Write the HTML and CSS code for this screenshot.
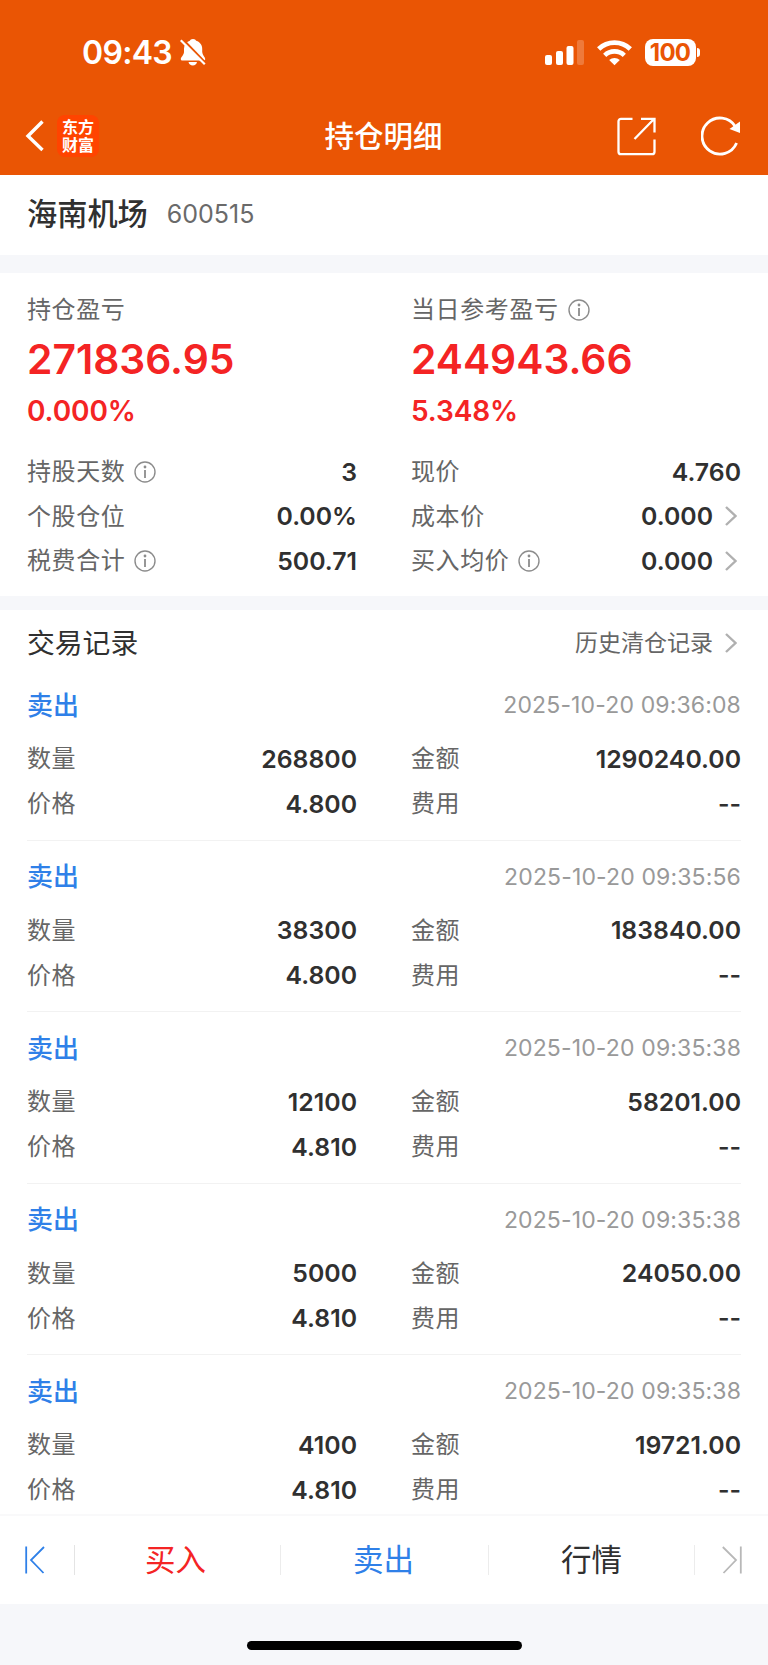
FILE: index.html
```
<!DOCTYPE html>
<html lang="zh-CN">
<head>
  <meta charset="UTF-8" />
  <meta name="viewport" content="width=device-width, initial-scale=1.0" />
  <title>持仓明细</title>
  <link rel="stylesheet" href="styles.css">
</head>
<body>
  <svg class="defs" width="0" height="0">
    <symbol id="info" viewBox="0 0 22 22">
      <circle cx="11" cy="11" r="10" fill="none" stroke="#8c8c8c" stroke-width="1.4" />
      <circle cx="11" cy="6" r="1.4" fill="#8c8c8c" />
      <path d="M11 9v8" stroke="#8c8c8c" stroke-width="1.8" />
    </symbol>
    <symbol id="more" viewBox="0 0 12 20">
      <path d="M1 1l9.5 9L1 19" fill="none" stroke="#b0b0b0" stroke-width="2.4" />
    </symbol>
  </svg>

  <header class="header">
    <div class="status">
      <span class="clock">09:43</span>
      <svg class="bell" width="26" height="28" viewBox="0 0 26 28">
        <path d="M13 1c-1.8 0-2.8 1-3.2 1.7C6 4 4 7 4 11v3c0 3-3.200 5-3.200 7 0 1 .7 1.500 1.700 1.500h21c1 0 1.700-.5 1.700-1.500 0-2-3-4-3-7v-3c0-4-2-7-6-8.300C15.800 2 14.800 1 13 1z" fill="#fff" />
        <path d="M8.500 24h8.500c-.4 2.200-2 3.500-4.200 3.500S8.900 26.200 8.500 24z" fill="#fff" />
        <path d="M2.500 1l24 25" stroke="#ea5504" stroke-width="2.400" />
        <path d="M.8 2.300l24 24" stroke="#fff" stroke-width="2.200" />
      </svg>
      <svg class="signal" width="39" height="26" viewBox="0 0 39 26">
        <rect x="0" y="15" width="7" height="10" rx="2" fill="#fff" />
        <rect x="11" y="11" width="7" height="14" rx="2" fill="#fff" />
        <rect x="21.500" y="6" width="7" height="19" rx="2" fill="#fff" />
        <rect x="32" y="0" width="7" height="25" rx="2" fill="#fff" fill-opacity=".22" />
      </svg>
      <svg class="wifi" width="35" height="26" viewBox="0 0 35 26">
        <path d="M17.500 25.300l-5.300-5.200a8 8 0 0 1 10.600 0z" fill="#fff" />
        <path d="M7.700 15.300a14.200 14.200 0 0 1 19.600 0" fill="none" stroke="#fff" stroke-width="4.600" />
        <path d="M1.700 8.900a23 23 0 0 1 31.600 0" fill="none" stroke="#fff" stroke-width="4.800" />
      </svg>
      <span class="battery">100</span>
      <span class="battery-cap"></span>
    </div>
    <div class="nav">
      <svg class="back" width="19" height="32" viewBox="0 0 19 32">
        <path d="M17.500 1.500L3 16l14.500 14" fill="none" stroke="#fff" stroke-width="3.400" />
      </svg>
      <div class="logo"><span>东方</span><span>财富</span></div>
      <h1 class="title">持仓明细</h1>
      <svg class="share" width="39" height="39" viewBox="0 0 39 39">
        <path d="M15.500 1.800H4a2.500 2.500 0 0 0-2.500 2.500v30.400A2.500 2.500 0 0 0 4 37.200h31a2.500 2.500 0 0 0 2.500-2.500V22.500M24 1.800h13.500v13.700M37 2L17.500 22" fill="none" stroke="#fff" stroke-width="2.300" />
      </svg>
      <svg class="refresh" width="40" height="40" viewBox="0 0 40 40">
        <path d="M35.600 27A18 18 0 1 1 34.300 10.500" fill="none" stroke="#fff" stroke-width="2.800" />
        <path d="M39 5.500v11.500L28.500 13z" fill="#fff" />
      </svg>
    </div>
  </header>

  <section class="stock">
    <h2>海南机场</h2>
    <span class="code">600515</span>
  </section>

  <section class="summary">
    <div class="profit">
      <div>
        <div class="label">持仓盈亏</div>
        <div class="big">271836.95</div>
        <div class="percent">0.000%</div>
      </div>
      <div>
        <div class="label">当日参考盈亏<svg class="info"><use href="#info" /></svg></div>
        <div class="big">244943.66</div>
        <div class="percent">5.348%</div>
      </div>
    </div>
    <div class="grid">
      <div class="row"><span class="label">持股天数<svg class="info"><use href="#info" /></svg></span><b>3</b></div>
      <div class="row"><span class="label">现价</span><b>4.760</b></div>
      <div class="row"><span class="label">个股仓位</span><b>0.00%</b></div>
      <div class="row"><span class="label">成本价</span><b>0.000</b><svg class="more"><use href="#more" /></svg></div>
      <div class="row"><span class="label">税费合计<svg class="info"><use href="#info" /></svg></span><b>500.71</b></div>
      <div class="row"><span class="label">买入均价<svg class="info"><use href="#info" /></svg></span><b>0.000</b><svg class="more"><use href="#more" /></svg></div>
    </div>
  </section>

  <section class="records">
    <div class="records-head">
      <h3>交易记录</h3>
      <span class="history">历史清仓记录</span>
      <svg class="more"><use href="#more" /></svg>
    </div>

    <div class="record">
      <div class="record-head"><span class="sell">卖出</span><time>2025-10-20 09:36:08</time></div>
      <div class="grid">
        <div class="row"><span class="label">数量</span><b>268800</b></div>
        <div class="row"><span class="label">金额</span><b>1290240.00</b></div>
        <div class="row"><span class="label">价格</span><b>4.800</b></div>
        <div class="row"><span class="label">费用</span><b>--</b></div>
      </div>
    </div>

    <div class="record">
      <div class="record-head"><span class="sell">卖出</span><time>2025-10-20 09:35:56</time></div>
      <div class="grid">
        <div class="row"><span class="label">数量</span><b>38300</b></div>
        <div class="row"><span class="label">金额</span><b>183840.00</b></div>
        <div class="row"><span class="label">价格</span><b>4.800</b></div>
        <div class="row"><span class="label">费用</span><b>--</b></div>
      </div>
    </div>

    <div class="record">
      <div class="record-head"><span class="sell">卖出</span><time>2025-10-20 09:35:38</time></div>
      <div class="grid">
        <div class="row"><span class="label">数量</span><b>12100</b></div>
        <div class="row"><span class="label">金额</span><b>58201.00</b></div>
        <div class="row"><span class="label">价格</span><b>4.810</b></div>
        <div class="row"><span class="label">费用</span><b>--</b></div>
      </div>
    </div>

    <div class="record">
      <div class="record-head"><span class="sell">卖出</span><time>2025-10-20 09:35:38</time></div>
      <div class="grid">
        <div class="row"><span class="label">数量</span><b>5000</b></div>
        <div class="row"><span class="label">金额</span><b>24050.00</b></div>
        <div class="row"><span class="label">价格</span><b>4.810</b></div>
        <div class="row"><span class="label">费用</span><b>--</b></div>
      </div>
    </div>

    <div class="record">
      <div class="record-head"><span class="sell">卖出</span><time>2025-10-20 09:35:38</time></div>
      <div class="grid">
        <div class="row"><span class="label">数量</span><b>4100</b></div>
        <div class="row"><span class="label">金额</span><b>19721.00</b></div>
        <div class="row"><span class="label">价格</span><b>4.810</b></div>
        <div class="row"><span class="label">费用</span><b>--</b></div>
      </div>
    </div>
  </section>

  <nav class="toolbar">
    <span class="step prev">
      <svg width="20" height="28" viewBox="0 0 20 28">
        <path d="M1.200 .5v27M19 1L6 14l12.500 13" fill="none" stroke="#2f80e8" stroke-width="1.800" />
      </svg>
    </span>
    <span class="tab buy">买入</span>
    <span class="tab sell-tab">卖出</span>
    <span class="tab">行情</span>
    <span class="step next">
      <svg width="20" height="28" viewBox="0 0 20 28">
        <path d="M18.800 .5v27M.8 1L14 14 1.500 27" fill="none" stroke="#b8b8b8" stroke-width="1.800" />
      </svg>
    </span>
  </nav>
  <footer class="home"><span></span></footer>
</body>
</html>
```
FILE: styles.css
```
* {
  box-sizing: border-box;
}
body {
  margin: 0;
  width: 768px;
  height: 1665px;
  overflow: hidden;
  display: flex;
  flex-direction: column;
  background: #fff;
  color: #303030;
  font-family: "Noto Sans CJK SC", sans-serif;
}
h1, h2, h3 {
  margin: 0;
  font-weight: 500;
}
svg {
  display: block;
  flex: none;
}
.defs {
  display: none;
}

/* header */
.header {
  flex: none;
  height: 174.5px;
  background: #ea5504;
  color: #fff;
}
.status {
  display: flex;
  align-items: center;
  height: 100px;
  padding: 5px 68px 0 82px;
}
.clock {
  font: 600 32px/40px Inter, sans-serif;
  letter-spacing: -0.7px;
  width: 98px;
}
.bell {
  margin: -2px auto 0 0;
}
.signal {
  margin-right: 13px;
}
.wifi {
  margin-right: 13px;
}
.battery {
  width: 51px;
  height: 27px;
  margin-top: -1px;
  border-radius: 8px;
  background: #fff;
  color: #ea5504;
  font: 700 24px/27px Inter, sans-serif;
  letter-spacing: -0.8px;
  text-align: center;
}
.battery-cap {
  width: 3px;
  height: 9px;
  margin-left: 1.500px;
  border-radius: 0 4px 4px 0;
  background: #fff;
}
.nav {
  display: flex;
  align-items: center;
  height: 72px;
  padding: 0 27px 0 25px;
}
.logo {
  display: flex;
  flex-direction: column;
  align-items: center;
  justify-content: center;
  width: 42px;
  height: 42px;
  margin-left: 13px;
  padding-bottom: 2px;
  border-radius: 8px;
  background: #ff4400;
  font-size: 16px;
  font-weight: 700;
  line-height: 18px;
}
.title {
  flex: 1;
  padding: 0 0 4px 51px;
  text-align: center;
  font-size: 29.500px;
}
.share {
  margin-right: 45px;
}

/* stock name */
.stock {
  display: flex;
  align-items: center;
  flex: none;
  height: 80.500px;
  padding: 0 27px;
}
.stock h2 {
  padding-bottom: 5px;
  font-size: 30.200px;
}
.code {
  margin: -1px 0 0 19px;
  color: #6a6a6a;
  font: 400 25px/30px Inter, sans-serif;
}

/* position summary */
.summary {
  flex: none;
  height: 355px;
  padding: 17px 27px 0;
  border-top: 18px solid #f6f7fa;
  border-bottom: 14px solid #f6f7fa;
}
.profit, .grid {
  display: grid;
  grid-template-columns: 330px 330px;
  column-gap: 54px;
}
.profit {
  height: 159.500px;
}
.label {
  display: flex;
  align-items: center;
  padding-bottom: 3px;
  color: #666;
  font-size: 24px;
  line-height: 36px;
  letter-spacing: 0.6px;
}
.info {
  width: 22px;
  height: 22px;
  margin: 3px 0 0 9px;
}
.more {
  width: 12px;
  height: 20px;
  margin: 0 4px 0 12px;
}
.big {
  color: #f42424;
  font: 600 40.800px/48px Inter, sans-serif;
  margin-top: 6px;
}
.percent {
  color: #f42424;
  font: 600 28px/36px Inter, sans-serif;
  letter-spacing: -0.1px;
  margin-top: 10px;
}
.row {
  display: flex;
  align-items: center;
  height: 44.600px;
}
.row b {
  margin-left: auto;
  font: 600 24.800px/30px Inter, sans-serif;
}

/* trade records */
.records {
  flex: 1;
  min-height: 0;
  overflow: hidden;
  padding: 0 27px;
}
.records-head {
  display: flex;
  align-items: center;
  height: 59px;
  padding-top: 6px;
}
.records-head h3 {
  margin-right: auto;
  padding-bottom: 4px;
  font-size: 27.800px;
  font-weight: 400;
}
.history {
  padding-bottom: 3px;
  color: #666;
  font-size: 23px;
}
.record {
  height: 171.500px;
  padding-top: 14px;
  border-bottom: 1px solid #f2f2f2;
}
.record-head {
  display: flex;
  align-items: center;
  justify-content: space-between;
  height: 44px;
  margin-bottom: 9.700px;
}
.sell {
  padding-bottom: 4px;
  color: #2f80e8;
  font-size: 26px;
  font-weight: 500;
}
time {
  color: #999;
  font: 400 23px/30px Inter, sans-serif;
  letter-spacing: 0.14px;
}

/* bottom toolbar */
.toolbar {
  display: flex;
  align-items: center;
  flex: none;
  height: 90.500px;
  border-top: 2px solid #f9f9fa;
}
.tab {
  width: 206px;
  height: 30px;
  border-right: 1px solid #ececec;
  text-align: center;
  font-size: 30.500px;
  line-height: 26px;
}
.buy {
  padding-right: 4px;
  color: #f42424;
}
.sell-tab {
  width: 208px;
  padding-right: 2px;
  color: #2f80e8;
}
.step {
  display: flex;
  align-items: center;
  width: 75px;
  height: 30px;
}
.prev {
  padding-left: 25px;
  border-right: 1px solid #e4e4e4;
}
.next {
  width: 73px;
  padding-left: 27px;
}
.home {
  flex: none;
  height: 61px;
  padding-top: 37px;
  background: #f6f7fa;
}
.home span {
  display: block;
  width: 275px;
  height: 9px;
  margin: 0 auto;
  border-radius: 5px;
  background: #000;
}
```
